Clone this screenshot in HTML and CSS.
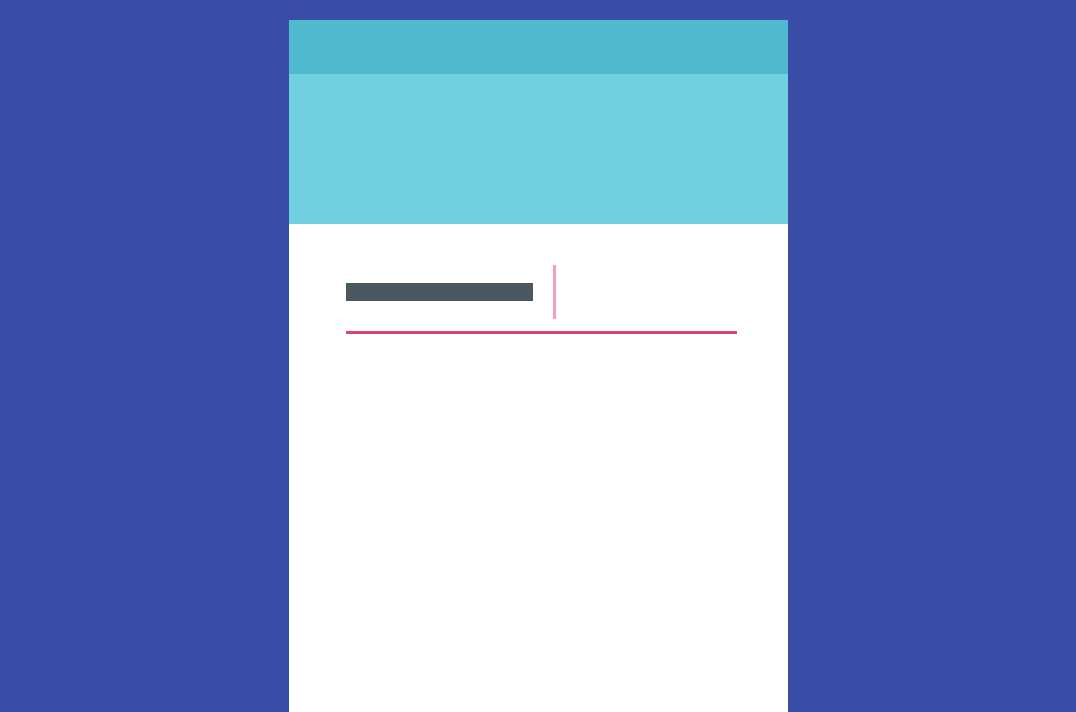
FILE: index.html
```html
<!DOCTYPE html>
<html>
<head>
<meta charset="utf-8">
<link rel="stylesheet" href="styles.css">
</head>
<body>
<div class="phone">
  <div class="statusbar"></div>
  <div class="appbar"></div>
  <div class="content">
    <div class="field">
      <div class="field-row">
        <div class="text-block"></div>
        <div class="cursor"></div>
      </div>
      <div class="underline"></div>
    </div>
  </div>
</div>
</body>
</html>
```
FILE: styles.css
```css
html, body {
  margin: 0;
  padding: 0;
  height: 100%;
}
body {
  background: #394da6;
  overflow: hidden;
  display: flex;
  justify-content: center;
}
.phone {
  margin-top: 20px;
  width: 499px;
  height: 692px;
  background: #ffffff;
  display: flex;
  flex-direction: column;
}
.statusbar {
  height: 54px;
  background: #4fb9d0;
}
.appbar {
  height: 150px;
  background: #72cfdf;
}
.content {
  padding: 41px 0 0 57px;
}
.field {
  width: 391px;
}
.field-row {
  display: flex;
  align-items: center;
  height: 54px;
}
.text-block {
  width: 187px;
  height: 18px;
  background: #4a5961;
}
.cursor {
  margin-left: 20px;
  width: 3px;
  height: 54px;
  background: #f1a1b9;
}
.underline {
  margin-top: 12px;
  height: 3px;
  background: #da4470;
}
```
